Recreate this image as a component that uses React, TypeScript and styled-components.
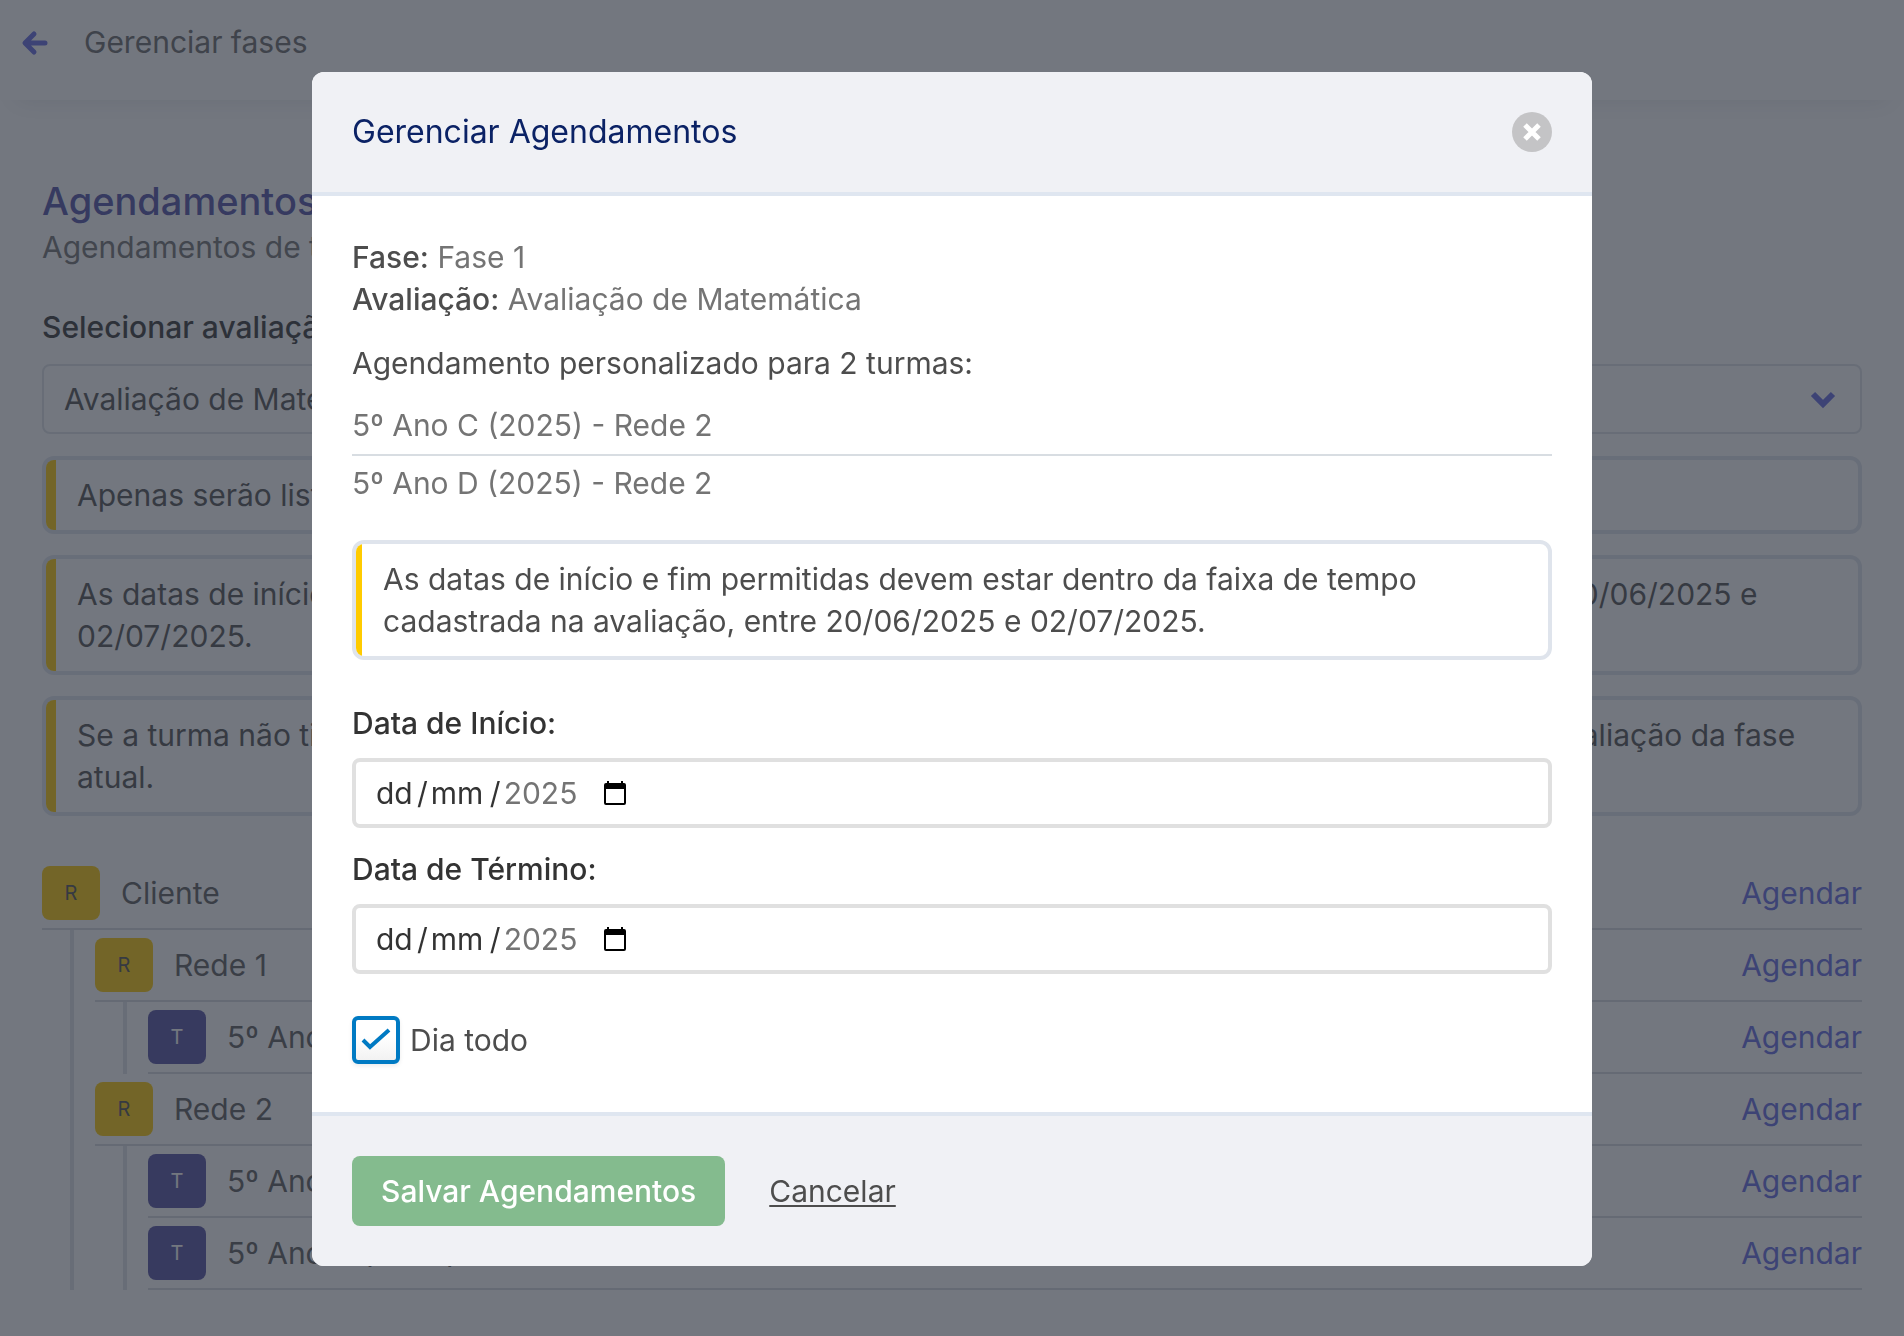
import React from "react";
import styled, { createGlobalStyle } from "styled-components";

const GlobalStyle = createGlobalStyle`
  *, *::before, *::after { box-sizing: border-box; }
  body {
    margin: 0;
    background: #ffffff;
    color: #4d4d4d;
    font-family: Inter, "Open Sans", sans-serif;
    font-size: 30px;
    line-height: 42px;
  }
  p, h1, h2, ul { margin: 0; padding: 0; }
  ul { list-style: none; }
  button, input, select { font: inherit; color: inherit; }
`;

const Page = styled.div`
  min-height: 100vh;
`;

const TopBar = styled.header`
  display: flex;
  align-items: center;
  gap: 34px;
  height: 100px;
  padding: 0 20px 16px;
  box-shadow: 0 16px 24px -16px rgba(60, 66, 87, 0.14);
`;

const BackButton = styled.button`
  display: flex;
  padding: 0;
  border: 0;
  background: none;
  color: #6068e0;
`;

const TopTitle = styled.p`
  color: #666666;
`;

const Main = styled.main`
  padding: 76px 42px 46px;
`;

const PageTitle = styled.h1`
  font-size: 38px;
  line-height: 50px;
  font-weight: 500;
  color: #4c4ca5;
`;

const PageSubtitle = styled.p`
  margin-bottom: 38px;
  color: #707070;
`;

const Label = styled.label`
  display: block;
  margin-bottom: 14px;
  font-weight: 500;
  color: #333333;
`;

const SelectBox = styled.div`
  display: grid;
  align-items: center;
  margin: 16px 0 22px;
  > * { grid-area: 1 / 1; }
  > svg { justify-self: end; margin-right: 25px; pointer-events: none; }
`;

const Select = styled.select`
  appearance: none;
  width: 100%;
  height: 70px;
  padding: 0 20px;
  border: 2px solid #dee2e6;
  border-radius: 8px;
  background: none;
  color: #4d4d4d;
`;

const Notices = styled.div`
  display: grid;
  gap: 21px;
  margin-bottom: 42px;
`;

const Notice = styled.div<{ $bar: number }>`
  display: flex;
  overflow: hidden;
  border: 4px solid #dfe4ec;
  border-radius: 12px;
  &::before {
    content: "";
    flex: none;
    width: ${(p) => p.$bar}px;
    background: #ffcb00;
  }
  > p { padding: 14px 21px; }
`;

const Tree = styled.ul``;

const Branch = styled.ul`
  margin-left: 28px;
  padding-left: 21px;
  border-left: 4px solid #dee2e6;
`;

const Row = styled.div`
  display: flex;
  align-items: center;
  gap: 21px;
  padding: 8px 0;
  border-bottom: 2px solid #d5dadf;
`;

const Tile = styled.span<{ $kind: "R" | "T" }>`
  display: grid;
  place-items: center;
  width: 58px;
  height: 54px;
  border-radius: 8px;
  font-size: 20px;
  background: ${(p) => (p.$kind === "R" ? "#ffcb00" : "#514da0")};
  color: ${(p) => (p.$kind === "R" ? "#4d4d4d" : "#ffffff")};
`;

const RowName = styled.span`
  flex: 1;
  color: #595959;
`;

const RowLink = styled.a`
  color: #6068e0;
  text-decoration: none;
`;

const Overlay = styled.div`
  position: fixed;
  inset: 0;
  display: flex;
  justify-content: center;
  align-items: flex-start;
  padding-top: 72px;
  overflow: auto;
  background: rgba(43, 48, 60, 0.66);
`;

const Dialog = styled.section`
  width: 100%;
  max-width: 1280px;
  overflow: hidden;
  border-radius: 12px;
  background: #ffffff;
`;

const DialogHeader = styled.header`
  display: flex;
  align-items: center;
  justify-content: space-between;
  padding: 40px;
  border-bottom: 4px solid #dfe6f0;
  background: #f0f1f5;
`;

const DialogTitle = styled.h2`
  font-size: 32px;
  line-height: 40px;
  font-weight: 400;
  color: #0b2265;
`;

const CloseButton = styled.button`
  display: grid;
  place-items: center;
  width: 40px;
  height: 40px;
  padding: 0;
  border: 0;
  border-radius: 50%;
  background: #c4c4c6;
  color: #ffffff;
`;

const DialogBody = styled.div`
  padding: 40px 40px 48px;
`;

const Info = styled.p`
  color: #747474;
  > strong { font-weight: 500; color: #4d4d4d; }
`;

const Summary = styled.p`
  margin: 22px 0 14px;
`;

const ClassList = styled.ul`
  margin-bottom: 28px;
  color: #747474;
`;

const ClassItem = styled.li`
  padding: 6px 0 8px;
  & + & { border-top: 2px solid #d8dde2; }
`;

const Form = styled.div`
  display: grid;
  gap: 20px;
  margin: 42px 0;
`;

const DateBox = styled.div`
  display: flex;
  align-items: center;
  gap: 3px;
  height: 70px;
  padding: 0 20px;
  border: 4px solid #e0e0e0;
  border-radius: 8px;
  color: #333333;
`;

const DatePart = styled.input<{ $width: number }>`
  width: ${(p) => p.$width}px;
  padding: 0;
  border: 0;
  outline: 0;
  background: none;
  &::placeholder { color: #333333; opacity: 1; }
`;

const YearPart = styled(DatePart)`
  color: #747474;
`;

const CalendarButton = styled.button`
  display: flex;
  margin-left: 20px;
  padding: 0;
  border: 0;
  background: none;
  color: #000000;
`;

const CheckRow = styled.label`
  display: flex;
  align-items: center;
  gap: 10px;
`;

const CheckFrame = styled.span`
  display: grid;
  place-items: center;
  > * { grid-area: 1 / 1; }
  > svg { pointer-events: none; }
`;

const CheckInput = styled.input`
  appearance: none;
  width: 48px;
  height: 48px;
  margin: 0;
  border: 4px solid #007ac3;
  border-radius: 6px;
  background: linear-gradient(#ffffff 40%, #f2f2f2);
  box-shadow: 0 2px 4px rgba(0, 0, 0, 0.08);
  & + svg { visibility: hidden; }
  &:checked + svg { visibility: visible; }
`;

const DialogFooter = styled.footer`
  display: flex;
  align-items: center;
  gap: 44px;
  padding: 40px;
  border-top: 4px solid #dfe6f0;
  background: #f0f1f5;
`;

const SaveButton = styled.button`
  height: 70px;
  padding: 0 29px;
  border: 0;
  border-radius: 8px;
  background: #84bb8e;
  color: #ffffff;
  font-weight: 500;
`;

const CancelButton = styled.button`
  padding: 0;
  border: 0;
  background: none;
  text-decoration: underline;
  text-decoration-thickness: 2px;
  text-underline-offset: 3px;
`;

type Node = { name: string; kind: "R" | "T"; children?: Node[] };

const tree: Node[] = [
  {
    name: "Cliente",
    kind: "R",
    children: [
      { name: "Rede 1", kind: "R", children: [{ name: "5º Ano A (2025)", kind: "T" }] },
      {
        name: "Rede 2",
        kind: "R",
        children: [
          { name: "5º Ano C (2025)", kind: "T" },
          { name: "5º Ano D (2025)", kind: "T" },
        ],
      },
    ],
  },
];

const classes = ["5º Ano C (2025) - Rede 2", "5º Ano D (2025) - Rede 2"];

const periodNotice =
  "As datas de início e fim permitidas devem estar dentro da faixa de tempo cadastrada na avaliação, entre 20/06/2025 e 02/07/2025.";

function TreeItem({ node }: { node: Node }) {
  return (
    <li>
      <Row>
        <Tile $kind={node.kind}>{node.kind}</Tile>
        <RowName>{node.name}</RowName>
        <RowLink href="#agendar">Agendar</RowLink>
      </Row>
      {node.children && (
        <Branch>
          {node.children.map((child) => (
            <TreeItem key={child.name} node={child} />
          ))}
        </Branch>
      )}
    </li>
  );
}

function DateField({ id, label }: { id: string; label: string }) {
  return (
    <div>
      <Label htmlFor={id}>{label}</Label>
      <DateBox>
        <DatePart id={id} $width={38} placeholder="dd" maxLength={2} />
        <span>/</span>
        <DatePart $width={56} placeholder="mm" maxLength={2} aria-label="Mês" />
        <span>/</span>
        <YearPart $width={76} defaultValue="2025" maxLength={4} aria-label="Ano" />
        <CalendarButton type="button" aria-label="Abrir calendário">
          <svg width="24" height="26" viewBox="0 0 24 26" fill="none">
            <path d="M2 6h20v17a1 1 0 0 1-1 1H3a1 1 0 0 1-1-1z" stroke="currentColor" strokeWidth="2" />
            <path d="M1 5a2 2 0 0 1 2-2h1V1h2v2h12V1h2v2h1a2 2 0 0 1 2 2v4H1z" fill="currentColor" />
          </svg>
        </CalendarButton>
      </DateBox>
    </div>
  );
}

export default function App() {
  return (
    <>
      <GlobalStyle />
      <Page>
        <TopBar>
          <BackButton aria-label="Voltar">
            <svg width="30" height="30" viewBox="0 0 30 30" fill="none" stroke="currentColor" strokeWidth="5" strokeLinecap="round" strokeLinejoin="round">
              <path d="M14 7L5 16l9 9M6 16h19" />
            </svg>
          </BackButton>
          <TopTitle>Gerenciar fases</TopTitle>
        </TopBar>
        <Main>
          <PageTitle>Agendamentos</PageTitle>
          <PageSubtitle>Agendamentos de turmas</PageSubtitle>
          <Label htmlFor="avaliacao">Selecionar avaliação:</Label>
          <SelectBox>
            <Select id="avaliacao">
              <option>Avaliação de Matemática</option>
            </Select>
            <svg width="28" height="28" viewBox="0 0 28 28" fill="none" stroke="#6068e0" strokeWidth="6">
              <path d="M4 9l10 10L24 9" />
            </svg>
          </SelectBox>
          <Notices>
            <Notice $bar={10}>
              <p>Apenas serão listadas as turmas que possuem alunos.</p>
            </Notice>
            <Notice $bar={10}>
              <p>{periodNotice}</p>
            </Notice>
            <Notice $bar={10}>
              <p>
                Se a turma não tiver um agendamento personalizado, será considerado o período
                completo definido na avaliação da fase atual.
              </p>
            </Notice>
          </Notices>
          <Tree>
            {tree.map((node) => (
              <TreeItem key={node.name} node={node} />
            ))}
          </Tree>
        </Main>
      </Page>
      <Overlay>
        <Dialog role="dialog" aria-modal="true" aria-labelledby="dialog-title">
          <DialogHeader>
            <DialogTitle id="dialog-title">Gerenciar Agendamentos</DialogTitle>
            <CloseButton aria-label="Fechar">
              <svg width="18" height="18" viewBox="0 0 18 18" fill="none" stroke="currentColor" strokeWidth="5">
                <path d="M2 2l14 14M16 2L2 16" />
              </svg>
            </CloseButton>
          </DialogHeader>
          <DialogBody>
            <Info>
              <strong>Fase:</strong> Fase 1
            </Info>
            <Info>
              <strong>Avaliação:</strong> Avaliação de Matemática
            </Info>
            <Summary>Agendamento personalizado para 2 turmas:</Summary>
            <ClassList>
              {classes.map((name) => (
                <ClassItem key={name}>{name}</ClassItem>
              ))}
            </ClassList>
            <Notice $bar={6}>
              <p>{periodNotice}</p>
            </Notice>
            <Form>
              <DateField id="inicio" label="Data de Início:" />
              <DateField id="termino" label="Data de Término:" />
            </Form>
            <CheckRow>
              <CheckFrame>
                <CheckInput type="checkbox" defaultChecked />
                <svg width="32" height="32" viewBox="0 0 32 32" fill="none" stroke="#007ac3" strokeWidth="4">
                  <path d="M3 16l7 7L29 6" />
                </svg>
              </CheckFrame>
              Dia todo
            </CheckRow>
          </DialogBody>
          <DialogFooter>
            <SaveButton>Salvar Agendamentos</SaveButton>
            <CancelButton>Cancelar</CancelButton>
          </DialogFooter>
        </Dialog>
      </Overlay>
    </>
  );
}
